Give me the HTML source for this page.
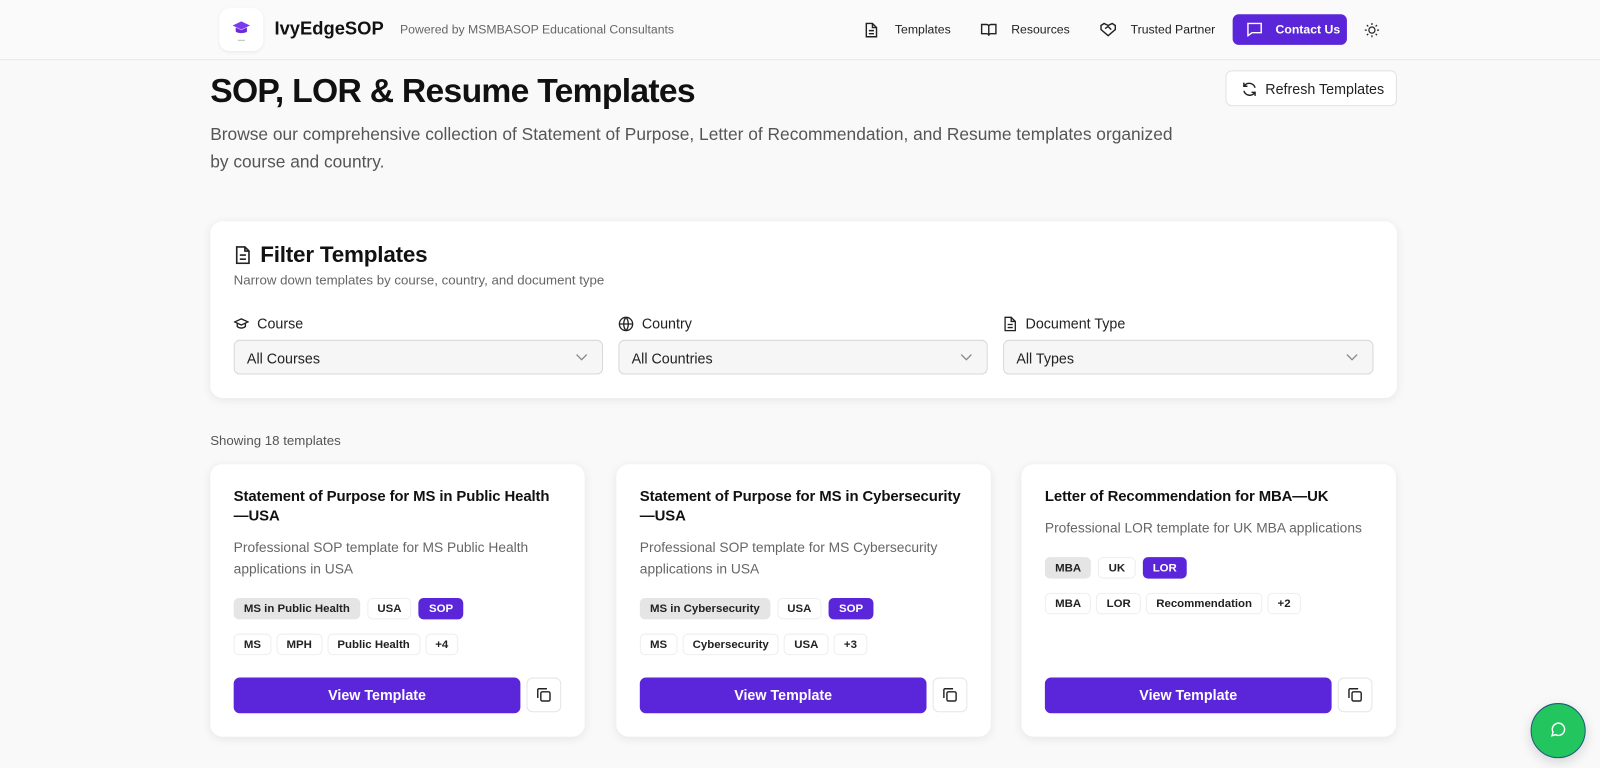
<!DOCTYPE html>
<html><head><meta charset="utf-8"><style>
*{box-sizing:border-box;margin:0;padding:0}
body{width:1600px;height:768px;overflow:hidden;background:#f9f9f9;font-family:"Liberation Sans",sans-serif;color:#111;position:relative}
#w{position:absolute;left:0;top:0;width:1568px;height:753px;transform:scale(1.0204);transform-origin:0 0}
.hdr{position:absolute;left:0;top:0;width:1568px;height:59px;border-bottom:1px solid #e8e8e8;background:#fafafa}
.abs{position:absolute}
.logo{left:215px;top:8px;width:43px;height:42px;background:#fff;border-radius:10px;box-shadow:0 1px 3px rgba(0,0,0,.06)}
.nav{font-size:12px;color:#222;top:22px}
svg{display:block}
.btn{background:#5b26d9;color:#fff;border-radius:6px}
.card{background:#fff;border-radius:12px;box-shadow:0 2px 10px rgba(0,0,0,.08)}
.sel{height:34px;border:1px solid #d8d8d8;border-radius:6px;background:#f6f6f6;font-size:14px;padding:9px 12px;color:#222}
.sel svg{position:absolute;right:14px;top:12px}
.lbl{font-size:14px;color:#222;top:309px;display:flex;align-items:center;gap:8px}
.t{font-size:14.6px;font-weight:bold;line-height:19px;color:#111;letter-spacing:-0.1px}
.d{font-size:13.5px;color:#666;line-height:21px}
.badges{display:flex;gap:7px;font-size:11.2px;font-weight:bold}
.b{height:21px;padding:4px 9px;border:1px solid #eee;border-radius:5px;background:#fff;color:#222}
.b.g{background:#e5e5e5;border-color:#e5e5e5}
.b.p{background:#5b26d9;color:#fff;border-color:#5b26d9}
.vb{height:35px;font-size:14px;font-weight:bold;text-align:center;line-height:35px}
.cp{width:34px;height:34px;border:1px solid #e5e5e5;border-radius:6px;background:#fff}
.cp svg{margin:8px}
</style></head><body><div id="w">
<div class="hdr"></div>
<div class="abs logo"><svg width="43" height="42" viewBox="0 0 43 42"><path d="M13 17 L21.5 13 L30 17 L21.5 21Z" fill="#7c3aed"/><path d="M16 19v4c2 2 9 2 11 0v-4l-5.5 2.5z" fill="#6d28d9"/><rect x="18" y="31" width="7" height="1" fill="#bbb"/></svg></div>
<div class="abs" style="left:269px;top:18px;font-size:18px;font-weight:bold">IvyEdgeSOP</div>
<div class="abs" style="left:392px;top:22px;font-size:12px;color:#666">Powered by MSMBASOP Educational Consultants</div>
<svg class="abs" style="left:847px;top:22px" width="14" height="15" viewBox="0 0 14 15" fill="none" stroke="#222" stroke-width="1.4"><path d="M2 1h6l4 4v9H2z M8 1v4h4 M4.5 8h5 M4.5 11h5"/></svg>
<div class="abs nav" style="left:877px">Templates</div>
<svg class="abs" style="left:961px;top:22px" width="16" height="14" viewBox="0 0 16 14" fill="none" stroke="#222" stroke-width="1.4"><path d="M1 2h5a2 2 0 0 1 2 2v9a2 2 0 0 0-2-2H1z M15 2h-5a2 2 0 0 0-2 2v9a2 2 0 0 1 2-2h5z"/></svg>
<div class="abs nav" style="left:991px">Resources</div>
<svg class="abs" style="left:1078px;top:22px" width="16" height="14" viewBox="0 0 16 14" fill="none" stroke="#222" stroke-width="1.4"><path d="M1 3l3-2 4 2 4-2 3 2v4l-7 6-7-6z M5 6l3-2 3 3"/></svg>
<div class="abs nav" style="left:1108px">Trusted Partner</div>
<div class="abs btn" style="left:1208px;top:14px;width:112px;height:30px"><svg class="abs" style="left:14px;top:8px" width="15" height="14" viewBox="0 0 15 14" fill="none" stroke="#fff" stroke-width="1.4"><path d="M1 1h13v9H5l-4 3z"/></svg><span class="abs" style="left:42px;top:8px;font-size:12px;font-weight:bold">Contact Us</span></div>
<svg class="abs" style="left:1337px;top:22px" width="15" height="15" viewBox="0 0 15 15" fill="none" stroke="#222" stroke-width="1.2"><circle cx="7.5" cy="7.5" r="3"/><path d="M7.5 0.5v2M7.5 12.5v2M0.5 7.5h2M12.5 7.5h2M2.5 2.5l1.4 1.4M11.1 11.1l1.4 1.4M2.5 12.5l1.4-1.4M11.1 3.9l1.4-1.4"/></svg>

<div class="abs" style="left:206px;top:70px;font-size:33px;font-weight:bold;letter-spacing:-0.7px">SOP, LOR &amp; Resume Templates</div>
<div class="abs" style="left:206px;top:118px;width:962px;font-size:17px;color:#555;line-height:27px">Browse our comprehensive collection of Statement of Purpose, Letter of Recommendation, and Resume templates organized by course and country.</div>
<div class="abs" style="left:1201px;top:69px;width:168px;height:35px;background:#fff;border:1px solid #e2e2e2;border-radius:6px"><svg class="abs" style="left:15px;top:10px" width="15" height="15" viewBox="0 0 15 15" fill="none" stroke="#222" stroke-width="1.4"><path d="M13 6A6 6 0 0 0 2.5 4M2 9a6 6 0 0 0 10.5 2M2 1v3.5h3.5M13 14v-3.5H9.5"/></svg><span class="abs" style="left:38px;top:9px;font-size:14px;color:#222">Refresh Templates</span></div>

<div class="abs card" style="left:206px;top:217px;width:1163px;height:173px"></div>
<svg class="abs" style="left:230px;top:241px" width="16" height="18" viewBox="0 0 16 18" fill="none" stroke="#222" stroke-width="1.6"><path d="M2 1h8l4 4v12H2z M10 1v4h4 M5 9h6 M5 13h6"/></svg>
<div class="abs" style="left:255px;top:237px;font-size:22px;font-weight:bold;letter-spacing:-0.2px">Filter Templates</div>
<div class="abs" style="left:229px;top:267px;font-size:13px;color:#666">Narrow down templates by course, country, and document type</div>
<div class="abs lbl" style="left:229px"><svg width="15" height="12" viewBox="0 0 15 12" fill="none" stroke="#222" stroke-width="1.3"><path d="M1 4.5l6.5-3 6.5 3-6.5 3z M3.5 6v3c2 2 6 2 8 0V6"/></svg>Course</div>
<div class="abs lbl" style="left:606px"><svg width="15" height="15" viewBox="0 0 15 15" fill="none" stroke="#222" stroke-width="1.3"><circle cx="7.5" cy="7.5" r="6.5"/><path d="M1 7.5h13M7.5 1c-3 3.5-3 9.5 0 13M7.5 1c3 3.5 3 9.5 0 13"/></svg>Country</div>
<div class="abs lbl" style="left:983px"><svg width="14" height="15" viewBox="0 0 14 15" fill="none" stroke="#222" stroke-width="1.3"><path d="M2 1h6l4 4v9H2z M8 1v4h4 M4.5 8h5 M4.5 11h5"/></svg>Document Type</div>
<div class="abs sel" style="left:229px;top:333px;width:362px">All Courses<svg width="12" height="8" viewBox="0 0 12 8" fill="none" stroke="#888" stroke-width="1.3"><path d="M1 1.5l5 5 5-5"/></svg></div>
<div class="abs sel" style="left:606px;top:333px;width:362px">All Countries<svg width="12" height="8" viewBox="0 0 12 8" fill="none" stroke="#888" stroke-width="1.3"><path d="M1 1.5l5 5 5-5"/></svg></div>
<div class="abs sel" style="left:983px;top:333px;width:363px">All Types<svg width="12" height="8" viewBox="0 0 12 8" fill="none" stroke="#888" stroke-width="1.3"><path d="M1 1.5l5 5 5-5"/></svg></div>

<div class="abs" style="left:206px;top:424px;font-size:13px;color:#555">Showing 18 templates</div>

<div class="abs card" style="left:206px;top:455px;width:367px;height:267px">
<div class="abs t" style="left:23px;top:23px;width:322px">Statement of Purpose for MS in Public Health —USA</div>
<div class="abs d" style="left:23px;top:71px;width:320px">Professional SOP template for MS Public Health applications in USA</div>
<div class="abs badges" style="left:23px;top:131px"><span class="b g">MS in Public Health</span><span class="b">USA</span><span class="b p">SOP</span></div>
<div class="abs badges" style="left:23px;top:166px;gap:5px"><span class="b">MS</span><span class="b">MPH</span><span class="b">Public Health</span><span class="b">+4</span></div>
<div class="abs btn vb" style="left:23px;top:209px;width:281px">View Template</div>
<div class="abs cp" style="left:310px;top:209px"><svg width="16" height="16" viewBox="0 0 16 16" fill="none" stroke="#222" stroke-width="1.4"><rect x="5" y="5" width="9" height="9" rx="1.5"/><path d="M2 11V3a1 1 0 0 1 1-1h8"/></svg></div>
</div>
<div class="abs card" style="left:604px;top:455px;width:367px;height:267px">
<div class="abs t" style="left:23px;top:23px;width:322px">Statement of Purpose for MS in Cybersecurity —USA</div>
<div class="abs d" style="left:23px;top:71px;width:320px">Professional SOP template for MS Cybersecurity applications in USA</div>
<div class="abs badges" style="left:23px;top:131px"><span class="b g">MS in Cybersecurity</span><span class="b">USA</span><span class="b p">SOP</span></div>
<div class="abs badges" style="left:23px;top:166px;gap:5px"><span class="b">MS</span><span class="b">Cybersecurity</span><span class="b">USA</span><span class="b">+3</span></div>
<div class="abs btn vb" style="left:23px;top:209px;width:281px">View Template</div>
<div class="abs cp" style="left:310px;top:209px"><svg width="16" height="16" viewBox="0 0 16 16" fill="none" stroke="#222" stroke-width="1.4"><rect x="5" y="5" width="9" height="9" rx="1.5"/><path d="M2 11V3a1 1 0 0 1 1-1h8"/></svg></div>
</div>
<div class="abs card" style="left:1001px;top:455px;width:367px;height:267px">
<div class="abs t" style="left:23px;top:23px;width:330px">Letter of Recommendation for MBA—UK</div>
<div class="abs d" style="left:23px;top:52px;width:330px">Professional LOR template for UK MBA applications</div>
<div class="abs badges" style="left:23px;top:91px"><span class="b g">MBA</span><span class="b">UK</span><span class="b p">LOR</span></div>
<div class="abs badges" style="left:23px;top:126px;gap:5px"><span class="b">MBA</span><span class="b">LOR</span><span class="b">Recommendation</span><span class="b">+2</span></div>
<div class="abs btn vb" style="left:23px;top:209px;width:281px">View Template</div>
<div class="abs cp" style="left:310px;top:209px"><svg width="16" height="16" viewBox="0 0 16 16" fill="none" stroke="#222" stroke-width="1.4"><rect x="5" y="5" width="9" height="9" rx="1.5"/><path d="M2 11V3a1 1 0 0 1 1-1h8"/></svg></div>
</div>

<div class="abs" style="left:1500px;top:689px;width:54px;height:54px;border-radius:50%;background:#22c55e;border:1.5px solid #1e5a7a;box-shadow:0 4px 12px rgba(0,0,0,.15)"><svg class="abs" style="left:18px;top:17px" width="16" height="16" viewBox="0 0 16 16" fill="none" stroke="#fff" stroke-width="1.4"><path d="M2 14l1-3.5A6 6 0 1 1 5.5 13z"/></svg></div>
</div></body></html>
